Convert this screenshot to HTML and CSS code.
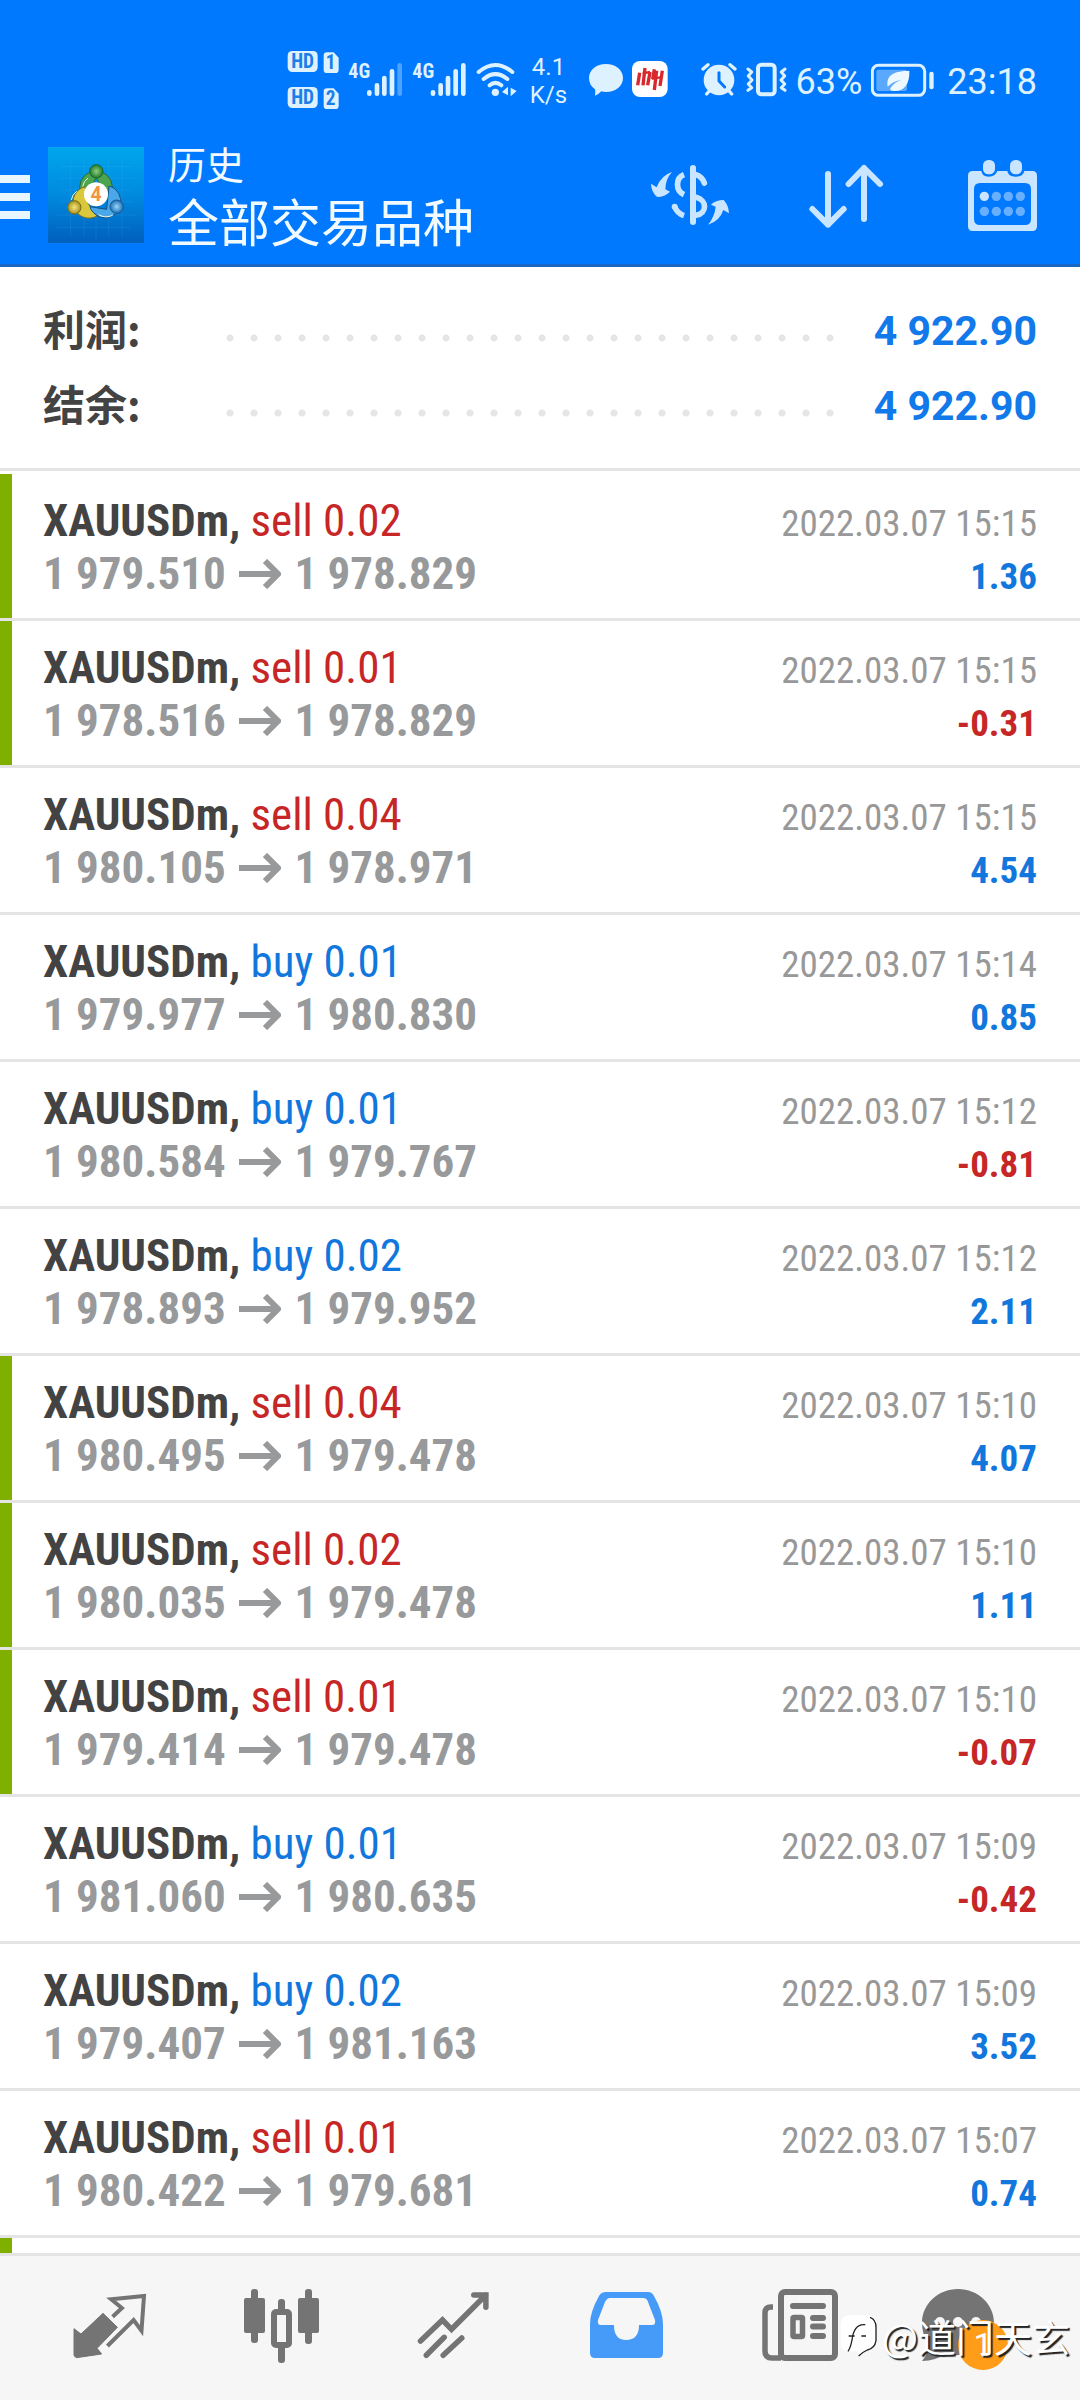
FILE: index.html
```html
<!DOCTYPE html>
<html lang="zh-CN">
<head>
<meta charset="utf-8">
<meta name="viewport" content="width=device-width, initial-scale=1">
<title>历史</title>
<link rel="stylesheet" href="styles.css">
</head>
<body>
<svg class="defs" aria-hidden="true">
  <symbol id="arrow" viewBox="0 0 42 30"><path d="M0 15H38M26 2L39 15L26 28" fill="none" stroke="currentColor" stroke-width="6"/></symbol>
</svg>
<div class="app">
  <header class="header">
    <div class="status">
      <div class="status-group">
        <svg width="52" height="63" viewBox="58 54 156 189" fill="#def1ff">
          <rect x="60" y="63" width="90" height="63" rx="14"/><path d="M178 67h20l15 16v36q0 10-10 10h-25q-10 0-10-10v-42q0-10 10-10z"/>
          <rect x="60" y="171" width="90" height="63" rx="14"/><path d="M178 175h20l15 16v36q0 10-10 10h-25q-10 0-10-10v-42q0-10 10-10z"/>
          <g class="sim-text"><text x="105" y="115">HD</text><text x="189" y="118">1</text><text x="105" y="223">HD</text><text x="189" y="226">2</text></g>
        </svg>
        <svg width="55" height="63" viewBox="246 54 165 189">
          <text class="net-text" x="247" y="143">4G</text>
          <g stroke="#def1ff" stroke-width="14" stroke-linecap="round"><path d="M310 187v4M333 166v25M355 144v47M378 124v67"/><path d="M401 106v85" opacity=".35"/></g>
        </svg>
        <svg width="55" height="63" viewBox="442 54 165 189">
          <text class="net-text" x="443" y="143">4G</text>
          <g stroke="#def1ff" stroke-width="14" stroke-linecap="round"><path d="M505 187v4M528 166v25M550 144v47M573 124v67M596 106v85"/></g>
        </svg>
        <svg width="41" height="63" viewBox="633 54 123 189">
          <g fill="none" stroke="#def1ff" stroke-width="12" stroke-linecap="round"><path d="M641 126Q691 84 742 126M656 147Q691 118 727 147M674 166Q691 151 709 166"/></g>
          <circle cx="691" cy="187" r="11" fill="#def1ff"/><path d="M711 186l18-16v26zM737 173l18 10-18 16z" fill="#def1ff"/>
        </svg>
        <p class="speed">4.1<br>K/s</p>
        <svg width="34" height="63" viewBox="960 54 102 189" fill="#def1ff"><path d="M1011 102c29 0 51 18 51 42s-22 42-51 42q-8 0-14-2-9 10-19 13 2-9 0-19c-12-8-18-20-18-34 0-24 22-42 51-42z"/></svg>
        <svg width="36" height="63" viewBox="1090 54 108 189"><rect x="1090" y="93" width="107" height="108" rx="24" fill="#fff"/><path d="M1113 128l-6 38M1129 114l-6 52M1144 126l-7 40M1157 118l-5 30M1164 122l-7 58M1181 122l-7 46" stroke="#d9282c" stroke-width="10" fill="none"/><path d="M1122 130l22-4M1150 146l26-4" stroke="#d9282c" stroke-width="7"/></svg>
      </div>
      <div class="status-group">
        <svg width="36" height="63" viewBox="65 54 108 189"><circle cx="119" cy="150" r="46" fill="#def1ff"/><path d="M71 117l15-13M167 117l-15-13M82 192l10-12M157 192l-10-12" stroke="#def1ff" stroke-width="10" stroke-linecap="round"/><path d="M119 128v25l17 18" fill="none" stroke="#0079ff" stroke-width="9" stroke-linecap="round"/></svg>
        <svg width="41" height="63" viewBox="205 54 123 189" fill="none" stroke="#def1ff" stroke-linecap="round" stroke-linejoin="round"><rect x="241" y="104" width="50" height="89" rx="10" stroke-width="12"/><path d="M211 117l11 9-10 12 11 12-11 12 10 11-11 8M322 117l-11 9 10 12-11 12 11 12-10 11 11 8" stroke-width="9"/></svg>
        <span class="status-text">63%</span>
        <svg width="63" height="63" viewBox="577 54 189 189"><rect x="581" y="106" width="157" height="90" rx="18" fill="none" stroke="#def1ff" stroke-width="9"/><rect x="593" y="119" width="92" height="64" rx="6" fill="#5aa9ff"/><rect x="752" y="125" width="13" height="53" rx="6" fill="#def1ff"/><path d="M692 122c2 46-22 66-52 60q-8-3-4-9 12-18 34-24-28 4-43 21c-6-40 25-46 65-48z" fill="#eef8ff"/></svg>
        <span class="status-text">23:18</span>
      </div>
    </div>
    <div class="toolbar">
      <button class="menu" aria-label="菜单"><i></i><i></i><i></i></button>
      <svg class="logo" viewBox="24 21 288 288">
        <defs>
          <linearGradient id="sky" x1="0" y1="0" x2="0" y2="1"><stop offset="0" stop-color="#00a6ee"/><stop offset=".5" stop-color="#008ade"/><stop offset="1" stop-color="#005fbd"/></linearGradient>
          <radialGradient id="green"><stop offset="0" stop-color="#8ed07e"/><stop offset="1" stop-color="#237b2d"/></radialGradient>
          <radialGradient id="yellow"><stop offset="0" stop-color="#f3e687"/><stop offset="1" stop-color="#a99316"/></radialGradient>
          <radialGradient id="blue"><stop offset="0" stop-color="#9ad6fa"/><stop offset="1" stop-color="#1c70b8"/></radialGradient>
        </defs>
        <rect x="24" y="21" width="288" height="288" fill="url(#sky)"/>
        <path d="M60 80H280M60 115H280M60 150H280M60 185H280M50 225H290M50 262H270M92 60V290M132 60V290M168 60V300M206 60V290M246 60V290" stroke="#5fc0f5" stroke-width="1" opacity=".4"/>
        <g stroke-width="3">
          <path d="M119 142a49 49 0 1 1 98 0q-3 18-14 30l-34-58-34 52q-13-8-16-24z" fill="#4ba54e" stroke="#2b6838"/>
          <path d="M135 140a48 48 0 1 0 36 88l-27-38z" fill="#d9c83c" stroke="#716c25"/>
          <path d="M207 138a48 48 0 1 1-26 94q-28-14-31-32l50 8z" fill="#4aa7e8" stroke="#174f84"/>
          <path d="M128 140a42 40 0 0 1 16-26M110 154q-14 10-16 26M176 224q20 12 42 2" stroke="#e9f9dc" fill="none"/>
          <circle cx="169" cy="94" r="20" fill="url(#green)" stroke="#1d6630"/>
          <circle cx="103" cy="202" r="20" fill="url(#yellow)" stroke="#766a1e"/>
          <circle cx="230" cy="200" r="20" fill="url(#blue)" stroke="#1a5791"/>
        </g>
        <circle cx="168" cy="163" r="36" fill="#fff"/>
        <text class="logo-text" x="168" y="184">4</text>
      </svg>
      <h1 class="title"><small>历史</small>全部交易品种</h1>
      <div class="actions">
        <button aria-label="交易品种"><svg width="80" height="75" viewBox="90 48 240 225">
          <g fill="none" stroke="#c9e5ff" stroke-linecap="round"><path d="M219 78V240" stroke-width="18"/><path d="M228 98q18 6 25 25M228 166c34 8 34 48 0 54" stroke-width="17"/><path d="M192 98c-26 10-26 48 0 60M164 194q7 20 28 27" stroke-width="17" stroke-linecap="butt"/><path d="M164 194v0" stroke-width="18"/></g>
          <path d="M156 90q-20 22-20 52l14 7q-16 16-38 16-18-14-19-40l17 11q13-36 46-46zM264 248q20-24 23-54l-14-6q14-14 38-14 15 16 16 40l-17-10q-11 34-46 44z" fill="#c9e5ff"/></svg></button>
        <button aria-label="排序"><svg width="80" height="75" viewBox="558 48 240 225" fill="none" stroke="#c9e5ff" stroke-width="18" stroke-linecap="round" stroke-linejoin="round"><path d="M624 96V248M577 201L624 248L671 201M732 231V78M686 126L732 78L780 126"/></svg></button>
        <button aria-label="日历"><svg width="80" height="75" viewBox="1026 48 240 225">
          <path fill-rule="evenodd" d="M1058 87h26q2 17 22 17t26-17h30q2 17 25 17t26-17h24q14 0 14 14v152q0 14-14 14h-179q-14 0-14-14V101q0-14 14-14zM1080 123q-18 0-18 18v90q0 18 18 18h135q18 0 18-18v-90q0-18-18-18z" fill="#c9e5ff"/>
          <g fill="#c9e5ff"><rect x="1089" y="54" width="36" height="43" rx="16"/><rect x="1170" y="54" width="36" height="43" rx="16"/><circle cx="1093" cy="163" r="14"/></g>
          <g fill="#68b0ff"><circle cx="1129" cy="163" r="14"/><circle cx="1165" cy="163" r="14"/><circle cx="1201" cy="163" r="14"/><circle cx="1093" cy="208" r="14"/><circle cx="1129" cy="208" r="14"/><circle cx="1165" cy="208" r="14"/><circle cx="1201" cy="208" r="14"/></g></svg></button>
      </div>
    </div>
  </header>

  <dl class="summary">
    <div><dt>利润:</dt><dd>4 922.90</dd></div>
    <div><dt>结余:</dt><dd>4 922.90</dd></div>
  </dl>

  <ul class="deals">
    <li class="tp"><b>XAUUSDm, <span class="sell">sell 0.02</span></b><time>2022.03.07 15:15</time><p>1 979.510 <svg><use href="#arrow"/></svg> 1 978.829</p><strong>1.36</strong></li>
    <li class="tp"><b>XAUUSDm, <span class="sell">sell 0.01</span></b><time>2022.03.07 15:15</time><p>1 978.516 <svg><use href="#arrow"/></svg> 1 978.829</p><strong class="loss">-0.31</strong></li>
    <li><b>XAUUSDm, <span class="sell">sell 0.04</span></b><time>2022.03.07 15:15</time><p>1 980.105 <svg><use href="#arrow"/></svg> 1 978.971</p><strong>4.54</strong></li>
    <li><b>XAUUSDm, <span>buy 0.01</span></b><time>2022.03.07 15:14</time><p>1 979.977 <svg><use href="#arrow"/></svg> 1 980.830</p><strong>0.85</strong></li>
    <li><b>XAUUSDm, <span>buy 0.01</span></b><time>2022.03.07 15:12</time><p>1 980.584 <svg><use href="#arrow"/></svg> 1 979.767</p><strong class="loss">-0.81</strong></li>
    <li><b>XAUUSDm, <span>buy 0.02</span></b><time>2022.03.07 15:12</time><p>1 978.893 <svg><use href="#arrow"/></svg> 1 979.952</p><strong>2.11</strong></li>
    <li class="tp"><b>XAUUSDm, <span class="sell">sell 0.04</span></b><time>2022.03.07 15:10</time><p>1 980.495 <svg><use href="#arrow"/></svg> 1 979.478</p><strong>4.07</strong></li>
    <li class="tp"><b>XAUUSDm, <span class="sell">sell 0.02</span></b><time>2022.03.07 15:10</time><p>1 980.035 <svg><use href="#arrow"/></svg> 1 979.478</p><strong>1.11</strong></li>
    <li class="tp"><b>XAUUSDm, <span class="sell">sell 0.01</span></b><time>2022.03.07 15:10</time><p>1 979.414 <svg><use href="#arrow"/></svg> 1 979.478</p><strong class="loss">-0.07</strong></li>
    <li><b>XAUUSDm, <span>buy 0.01</span></b><time>2022.03.07 15:09</time><p>1 981.060 <svg><use href="#arrow"/></svg> 1 980.635</p><strong class="loss">-0.42</strong></li>
    <li><b>XAUUSDm, <span>buy 0.02</span></b><time>2022.03.07 15:09</time><p>1 979.407 <svg><use href="#arrow"/></svg> 1 981.163</p><strong>3.52</strong></li>
    <li><b>XAUUSDm, <span class="sell">sell 0.01</span></b><time>2022.03.07 15:07</time><p>1 980.422 <svg><use href="#arrow"/></svg> 1 979.681</p><strong>0.74</strong></li>
    <li class="tp rest"></li>
  </ul>

  <nav class="tabs">
    <button aria-label="行情"><svg viewBox="0 0 96 84"><path d="M50.600 30.700L59.900 22L49.200 13.300L82 10L79.500 44.700L71.600 34L45.400 60" fill="none" stroke="currentColor" stroke-width="4"/><path d="M41 27.300L55.400 41.300L35.100 62.300L39.600 68L14.400 71.700L12 69.700V42.700L19 48z" fill="currentColor" stroke="currentColor" stroke-linejoin="round"/></svg></button>
    <button aria-label="图表"><svg viewBox="0 0 96 84" fill="currentColor"><rect x="10" y="12" width="21" height="35" rx="2"/><rect x="17" y="3" width="7" height="54" rx="3"/><rect x="44" y="13" width="7" height="14" rx="3"/><rect x="44" y="58" width="7" height="19" rx="3"/><rect x="40" y="26" width="15" height="33" rx="2" fill="none" stroke="currentColor" stroke-width="6"/><rect x="64" y="12" width="21" height="35" rx="2"/><rect x="71" y="3" width="7" height="55" rx="3"/></svg></button>
    <button aria-label="交易"><svg viewBox="0 0 96 84" fill="none" stroke="currentColor" stroke-width="5.500" stroke-linecap="round"><path d="M14.500 55L36.500 34L45.500 43.300L79.900 9M67.800 9H79.900V21.300M20.300 69.300L38.200 51.300M37.200 69.300L55.800 52"/></svg></button>
    <button class="active" aria-label="历史"><svg viewBox="0 0 96 84"><path fill="currentColor" fill-rule="evenodd" d="M28 6H70Q74 6 76 10Q85 26 85 38V67Q85 72 80 72H17Q12 72 12 67V38Q12 26 21 10Q23 6 28 6zM32 12Q29 12 27 16L20 34Q19 39 23 39H36Q36 54 48 54Q61 54 61 39H74Q78 39 77 34L70 16Q69 12 65 12z"/></svg></button>
    <button aria-label="新闻"><svg viewBox="0 0 96 84" fill="none" stroke="currentColor"><rect x="31" y="6" width="54" height="66" rx="4" stroke-width="6"/><path d="M23 21H21Q15 21 15 27V65Q15 72 22 72H31" stroke-width="5.500"/><path d="M43 20H73M63 32H73M63 40.500H73M63 50H73" stroke-width="6" stroke-linecap="round"/><rect x="43" y="31.500" width="9.500" height="19" rx="1" stroke-width="5.500"/></svg></button>
    <button aria-label="消息"><svg viewBox="0 0 96 84"><path d="M36 3C56 3 72 18 72 37S56 69 36 69Q29 69 24 67Q14 75 0 75Q7 67 6 58Q0 48 0 37C0 18 16 3 36 3z" fill="currentColor"/><g fill="#f6f6f6"><circle cx="18" cy="36" r="5"/><circle cx="36" cy="36" r="5"/><circle cx="54" cy="36" r="5"/></g></svg><span class="badge">1</span></button>
  </nav>
  <div class="watermark">
    <svg width="38" height="44" viewBox="0 0 114 132"><path d="M26 4H88Q110 6 110 30V78Q108 102 84 108Q70 112 58 128L52 112H22Q2 108 2 88V30Q4 6 26 4z" fill="#fff"/><path d="M90 10Q108 16 108 40V80Q104 104 82 108Q68 114 56 126M24 112Q32 100 36 78Q42 28 76 32M26 66H44M64 66H78" fill="none" stroke="#222" stroke-width="4"/></svg>
    <span>@道门天玄</span>
  </div>
</div>
</body>
</html>
```
FILE: styles.css
```css
* { box-sizing: border-box; margin: 0; padding: 0; }
body { font-family: Roboto, "Noto Sans CJK SC", sans-serif; background: #fff; color: #434343; }
button { border: 0; background: none; color: inherit; font: inherit; }
svg { display: block; flex: none; }
.defs { position: absolute; width: 0; height: 0; }

.app { position: relative; display: flex; flex-direction: column; min-height: 100vh; }

.header { background: #0079ff; color: #f0faff; border-bottom: 3px solid #1a68c4; }
.status { display: flex; justify-content: flex-end; gap: 33px; height: 126px; padding: 48px 43px 0 0; }
.status-group { display: flex; gap: 9px; color: #def1ff; }
.status-text { font-size: 36px; line-height: 69px; }
.status-text:last-child { margin-left: 4px; }
.speed { width: 44px; margin-right: 10px; padding: 5px 0 0 2px; font-size: 24px; line-height: 28px; text-align: center; }
.sim-text { font: 700 58px "Roboto Condensed", sans-serif; text-anchor: middle; fill: #1c7ee8; }
.net-text { font: 700 60px "Roboto Condensed", sans-serif; fill: #def1ff; }
.logo-text { font: 700 58px Roboto, sans-serif; text-anchor: middle; fill: #f29440; }

.toolbar { display: flex; align-items: center; height: 138px; padding-right: 38px; }
.menu { display: flex; flex-direction: column; gap: 10px; width: 30px; margin-right: 18px; padding-top: 4px; }
.menu i { width: 100%; height: 8px; background: #e8f7ff; }
.logo { width: 96px; height: 96px; }
.title { flex: 1; margin-left: 24px; padding-top: 4px; font-size: 51px; font-weight: 400; line-height: 62px; white-space: nowrap; }
.title small { display: block; font-size: 38px; line-height: 56px; }
.actions { display: flex; gap: 76px; }

.summary { padding: 25px 43px 26px; border-bottom: 3px solid #e4e4e4; }
.summary div { display: flex; align-items: center; height: 75px; font-size: 41px; font-weight: 700; }
.summary dt { width: 175px; padding-bottom: 4px; font-family: "Noto Sans CJK SC", sans-serif; font-size: 42px; }
.summary dd { display: flex; flex: 1; align-items: center; justify-content: space-between; padding-top: 2px; color: #1279ea; }
.summary dd::before { content: ""; flex: 1; height: 8px; margin: 15px 31px 0 8px; background: radial-gradient(circle at 4px 4px, #e5e5e5 3px, transparent 4px) 0 0 / 24px 8px; }

.deals { display: flex; flex: 1; flex-direction: column; padding-top: 3px; list-style: none; font-family: "Roboto Condensed", Roboto, sans-serif; }
.deals li { display: grid; grid-template-columns: 1fr auto; align-content: start; align-items: baseline; height: 147px; padding: 22px 43px 0; background: linear-gradient(#e4e4e4, #e4e4e4) left bottom / 100% 3px no-repeat; }
.deals li.tp { background: linear-gradient(#e4e4e4, #e4e4e4) left bottom / 100% 3px no-repeat, linear-gradient(#7fb000, #7fb000) left top / 12px 100% no-repeat; }
.deals li.rest { flex: 1; height: auto; min-height: 15px; padding: 0; background: linear-gradient(#7fb000, #7fb000) left top / 12px 100% no-repeat; }
.deals b, .deals p { font-size: 45px; line-height: 50px; font-weight: 700; }
.deals b span { font-weight: 400; color: #1277dd; }
.deals b .sell { color: #c62626; }
.deals p { color: #97999b; }
.deals p svg { display: inline-block; width: 42px; height: 30px; margin: 0 3px; }
.deals time, .deals strong { font-size: 37px; line-height: 50px; text-align: right; }
.deals time { color: #989898; }
.deals strong { color: #1277dd; }
.deals .loss { color: #c62626; }

.tabs { display: flex; height: 147px; padding: 0 24px; background: #f6f6f6; border-top: 3px solid #e4e4e4; color: #747474; }
.tabs button { position: relative; display: flex; flex: 1; align-items: center; justify-content: center; }
.tabs svg { width: 96px; height: 84px; }
.tabs .active { color: #479bf8; }
.badge { position: absolute; left: 50%; top: 50%; width: 50px; height: 50px; margin: -8px 0 0 -12px; border-radius: 50%; background: #ff9c18; color: #fff; font-size: 34px; line-height: 50px; text-align: center; }
.watermark { position: absolute; right: 10px; bottom: 36px; display: flex; align-items: center; gap: 4px; color: #fff; font-family: "Noto Sans CJK SC", sans-serif; font-size: 38px; line-height: 56px; text-shadow: 2px 2px 1px #222; pointer-events: none; }
```
